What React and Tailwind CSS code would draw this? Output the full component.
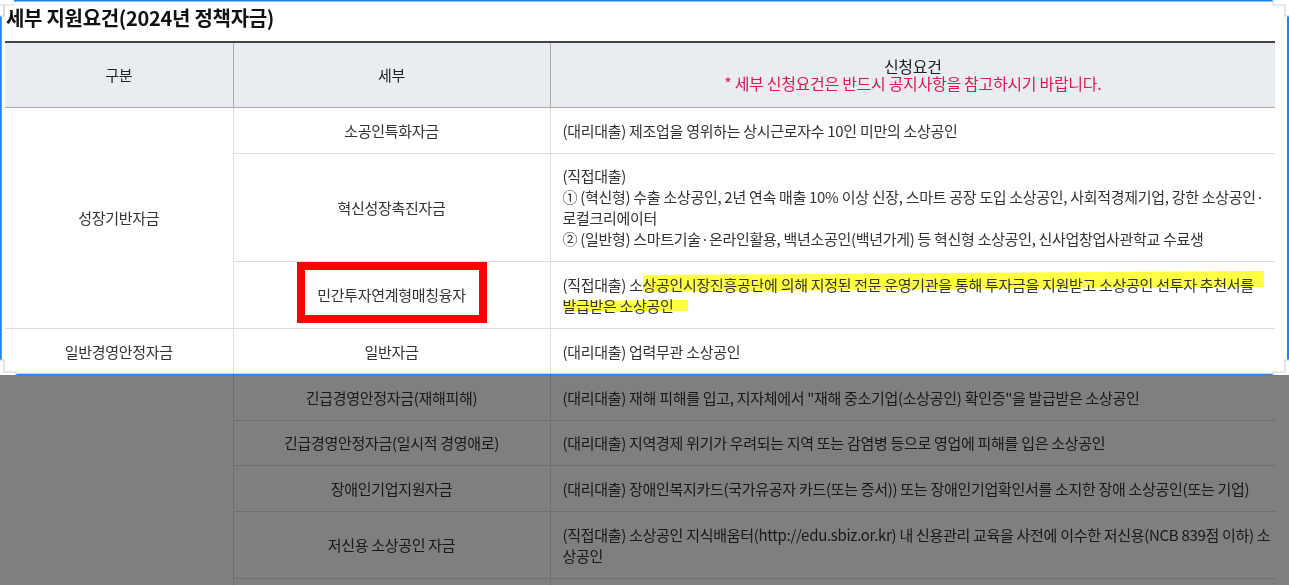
import React from "react";

const F = { fontFamily: '"Noto Sans CJK KR", "Noto Sans", sans-serif' };

function Highlight() {
  return (
    <svg
      className="absolute left-0 top-0 pointer-events-none mix-blend-multiply"
      width="725"
      height="67"
      viewBox="0 0 725 67"
      style={{ overflow: "visible" }}
    >
      <polygon points="92,13 713,9 713,25 92,30" fill="#ffff30" opacity="0.9" />
      <polygon points="12,39 137,38 137,49 12,50" fill="#ffff30" opacity="0.9" />
    </svg>
  );
}

function Frame() {
  return (
    <svg
      className="absolute left-0 top-0 pointer-events-none"
      width="1289"
      height="585"
      viewBox="0 0 1289 585"
    >
      <line x1="14" y1="0.5" x2="1273" y2="0.5" stroke="#1a84f2" strokeWidth="2" />
      <line x1="0.5" y1="16" x2="0.5" y2="360" stroke="#1a84f2" strokeWidth="2.5" />
      <line x1="1288" y1="16" x2="1288" y2="360" stroke="#1a84f2" strokeWidth="2" />
      <line x1="16" y1="374.5" x2="1273" y2="374.5" stroke="#1a84f2" strokeWidth="1.5" />
      <polyline points="0,5 4,5 4,16 0,16" fill="none" stroke="#d4d4d4" strokeWidth="1.2" />
      <polyline points="4,16 4,5 14,5" fill="none" stroke="#d4d4d4" strokeWidth="1.2" />
      <polyline points="1273,0 1273,5 1285,5 1285,16 1289,16" fill="none" stroke="#d4d4d4" strokeWidth="1.2" />
      <polyline points="1289,360 1285,360 1285,372 1273,372 1273,375" fill="none" stroke="#d4d4d4" strokeWidth="1.2" />
      <polyline points="0,360 4,360 4,372 16,372 16,375" fill="none" stroke="#d4d4d4" strokeWidth="1.2" />
    </svg>
  );
}

const tdC = "border border-[#dddddd] text-center align-middle px-3 py-3";
const tdL = "border border-[#dddddd] text-left align-middle px-3 py-3";

export default function App() {
  return (
    <div className="relative w-[1289px] h-[585px] overflow-hidden bg-white" style={F}>
      <div className="pl-[5px] pr-[14px]">
        <h2 className="pt-[5px] pb-[10px] pl-[1px] text-[20px] leading-[26px] font-bold text-[#111] tracking-[-0.3px]">
          세부 지원요건(2024년 정책자금)
        </h2>
        <table className="w-[1270px] border-collapse text-[15px] leading-[21px] text-[#333] tracking-[-0.3px] table-fixed">
          <colgroup>
            <col className="w-[228px]" />
            <col className="w-[317px]" />
            <col className="w-[725px]" />
          </colgroup>
          <thead>
            <tr className="bg-[#e9ecf1] h-[65px]">
              <th className="border-t-2 border-t-[#444] border-b border-b-[#aaaaaa] border-r border-r-[#aaaaaa] font-normal align-middle text-[#222]">
                구분
              </th>
              <th className="border-t-2 border-t-[#444] border-b border-b-[#aaaaaa] border-r border-r-[#aaaaaa] font-normal align-middle text-[#222]">
                세부
              </th>
              <th className="border-t-2 border-t-[#444] border-b border-b-[#aaaaaa] font-normal align-middle leading-[17px] text-[16px]">
                <div className="text-[#222]">신청요건</div>
                <div className="text-[#e8164f]">* 세부 신청요건은 반드시 공지사항을 참고하시기 바랍니다.</div>
              </th>
            </tr>
          </thead>
          <tbody>
            <tr>
              <td className={tdC + " border-l-0"} rowSpan={3}>성장기반자금</td>
              <td className={tdC}>소공인특화자금</td>
              <td className={tdL + " border-r-0"}>(대리대출) 제조업을 영위하는 상시근로자수 10인 미만의 소상공인</td>
            </tr>
            <tr>
              <td className={tdC}>혁신성장촉진자금</td>
              <td className={tdL + " border-r-0 whitespace-nowrap py-[11.5px]"}>
                (직접대출)
                <br />① (혁신형) 수출 소상공인, 2년 연속 매출 10% 이상 신장, 스마트 공장 도입 소상공인, 사회적경제기업, 강한 소상공인·
                <br />로컬크리에이터
                <br />② (일반형) 스마트기술·온라인활용, 백년소공인(백년가게) 등 혁신형 소상공인, 신사업창업사관학교 수료생
              </td>
            </tr>
            <tr>
              <td className={tdC}>
                <span className="relative inline-block">
                  민간투자연계형매칭융자
                  <span className="absolute top-[-22px] bottom-[-18px] left-[-20px] right-[-21px] border-8 border-[#ff0000]" />
                </span>
              </td>
              <td className={tdL + " border-r-0 relative whitespace-nowrap"}>
                <Highlight />
                <span className="relative">
                  (직접대출) 소상공인시장진흥공단에 의해 지정된 전문 운영기관을 통해 투자금을 지원받고 소상공인 선투자 추천서를
                  <br />발급받은 소상공인
                </span>
              </td>
            </tr>
            <tr>
              <td className={tdC + " border-l-0 align-top"} rowSpan={6}>일반경영안정자금</td>
              <td className={tdC}>일반자금</td>
              <td className={tdL + " border-r-0"}>(대리대출) 업력무관 소상공인</td>
            </tr>
            <tr>
              <td className={tdC}>긴급경영안정자금(재해피해)</td>
              <td className={tdL + " border-r-0"}>(대리대출) 재해 피해를 입고, 지자체에서 "재해 중소기업(소상공인) 확인증"을 발급받은 소상공인</td>
            </tr>
            <tr>
              <td className={tdC + " py-[11.5px]"}>긴급경영안정자금(일시적 경영애로)</td>
              <td className={tdL + " border-r-0 py-[11.5px]"}>(대리대출) 지역경제 위기가 우려되는 지역 또는 감염병 등으로 영업에 피해를 입은 소상공인</td>
            </tr>
            <tr>
              <td className={tdC}>장애인기업지원자금</td>
              <td className={tdL + " border-r-0"}>(대리대출) 장애인복지카드(국가유공자 카드(또는 증서)) 또는 장애인기업확인서를 소지한 장애 소상공인(또는 기업)</td>
            </tr>
            <tr>
              <td className={tdC}>저신용 소상공인 자금</td>
              <td className={tdL + " border-r-0 whitespace-nowrap"}>
                (직접대출) 소상공인 지식배움터(http://edu.sbiz.or.kr) 내 신용관리 교육을 사전에 이수한 저신용(NCB 839점 이하) 소
                <br />상공인
              </td>
            </tr>
            <tr>
              <td className={tdC}>재도전특별자금</td>
              <td className={tdL + " border-r-0"}>(직접대출) 재창업 소상공인</td>
            </tr>
          </tbody>
        </table>
      </div>
      <div className="absolute left-0 right-0 top-[375px] bottom-0 bg-black/50" />
      <Frame />
    </div>
  );
}
